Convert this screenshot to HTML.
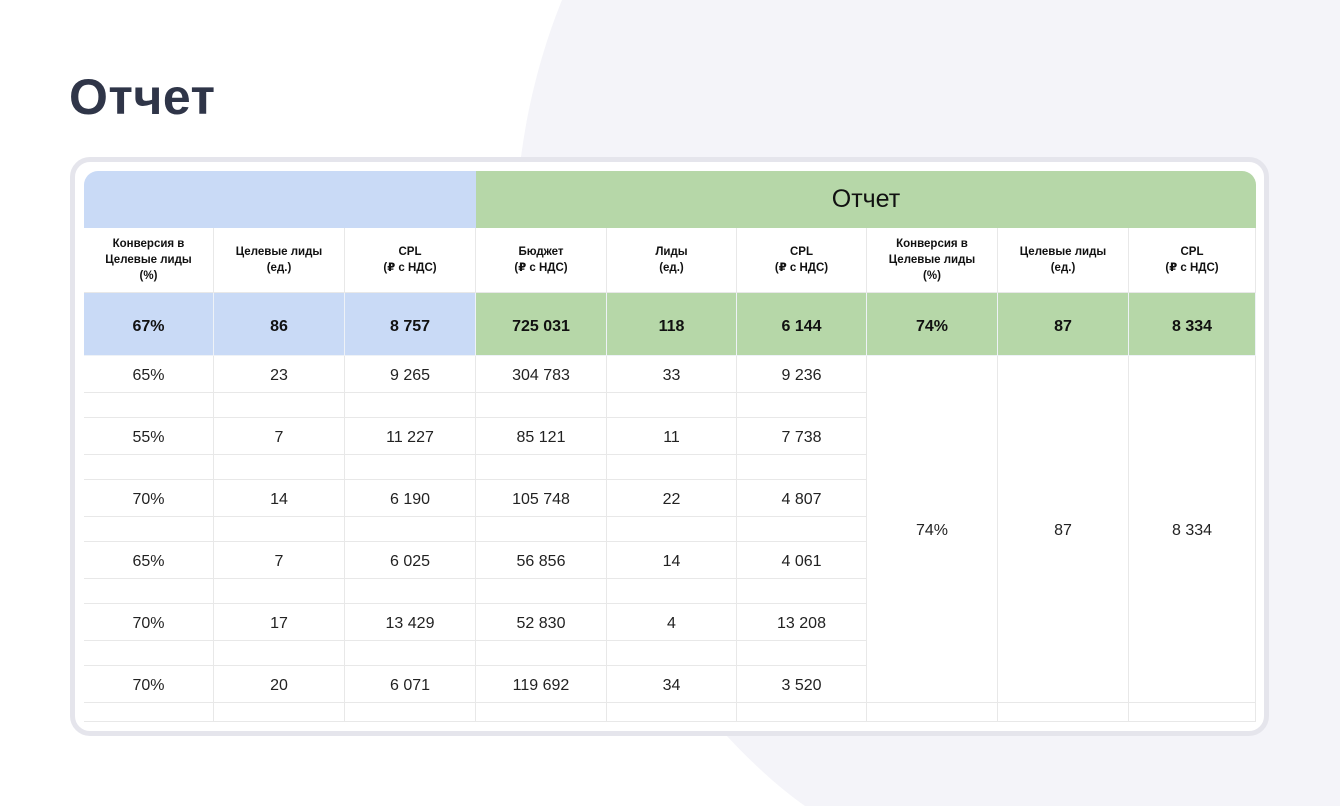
<!DOCTYPE html>
<html><head><meta charset="utf-8"><style>
*{margin:0;padding:0;box-sizing:border-box}
body{width:1340px;height:806px;position:relative;overflow:hidden;background:#fff;font-family:"Liberation Sans","DejaVu Sans",sans-serif;color:#111}
#bg{position:absolute;left:0;top:0}
h1{position:absolute;left:69px;top:68px;font-size:50px;font-weight:bold;color:#2f3548;letter-spacing:0.5px}
.card{position:absolute;left:70px;top:157px;width:1199px;height:579px;border:5px solid #e5e5ec;border-radius:20px;background:#fff}
.c{position:absolute;display:flex;align-items:center;justify-content:center;text-align:center;border-right:1px solid #e8e8e8;border-bottom:1px solid #e8e8e8}
.h{font-size:11.5px;font-weight:bold;line-height:16px;color:#111}
.t{font-size:16px;font-weight:bold;padding-top:5px}
.v{font-size:16px;color:#222;padding-top:4px}
</style></head><body>
<svg id="bg" width="1340" height="806"><path d="M562,0 C505,140 485,350 590,540 C660,670 740,760 805,806 L1340,806 L1340,0 Z" fill="#f4f4f9"/></svg>
<h1>Отчет</h1>
<div class="card"></div>
<div style="position:absolute;left:84px;top:171px;width:392px;height:57px;background:#c9daf6;border-radius:14px 0 0 0"></div>
<div style="position:absolute;left:476px;top:171px;width:780px;height:57px;background:#b6d7a8;border-radius:0 14px 0 0;display:flex;align-items:center;justify-content:center;font-size:25px;color:#111">Отчет</div>
<div id="grid"></div>
<script>
var xs=[84,214,345,476,607,737,867,998,1129,1256];
var heads=["Конверсия в<br>Целевые лиды<br>(%)","Целевые лиды<br>(ед.)","CPL<br>(₽ с НДС)","Бюджет<br>(₽ с НДС)","Лиды<br>(ед.)","CPL<br>(₽ с НДС)","Конверсия в<br>Целевые лиды<br>(%)","Целевые лиды<br>(ед.)","CPL<br>(₽ с НДС)"];
var tot=["67%","86","8 757","725 031","118","6 144","74%","87","8 334"];
var rows=[["65%","23","9 265","304 783","33","9 236"],["55%","7","11 227","85 121","11","7 738"],["70%","14","6 190","105 748","22","4 807"],["65%","7","6 025","56 856","14","4 061"],["70%","17","13 429","52 830","4","13 208"],["70%","20","6 071","119 692","34","3 520"]];
var h="";
function cell(x,y,w,hh,cls,txt,bg){h+='<div class="c '+cls+'" style="left:'+x+'px;top:'+y+'px;width:'+w+'px;height:'+hh+'px;'+(bg?'background:'+bg+';border-color:#eef2f7;':'')+'">'+txt+'</div>';}
for(var i=0;i<9;i++){var w=xs[i+1]-xs[i];
cell(xs[i],228,w,65,"h",heads[i]);
cell(xs[i],293,w,63,"t",tot[i],i<3?"#c9daf6":"#b6d7a8");}
for(var r=0;r<6;r++){var y=356+r*62;
for(var i=0;i<6;i++){var w=xs[i+1]-xs[i];
cell(xs[i],y,w,37,"v",rows[r][i]);
cell(xs[i],y+37,w,r==5?19:25,"v","");}}
var m=["74%","87","8 334"];
for(var i=6;i<9;i++){cell(xs[i],356,xs[i+1]-xs[i],347,"v",m[i-6]);cell(xs[i],703,xs[i+1]-xs[i],19,"v","");}
document.getElementById("grid").innerHTML=h;
</script>
</body></html>
